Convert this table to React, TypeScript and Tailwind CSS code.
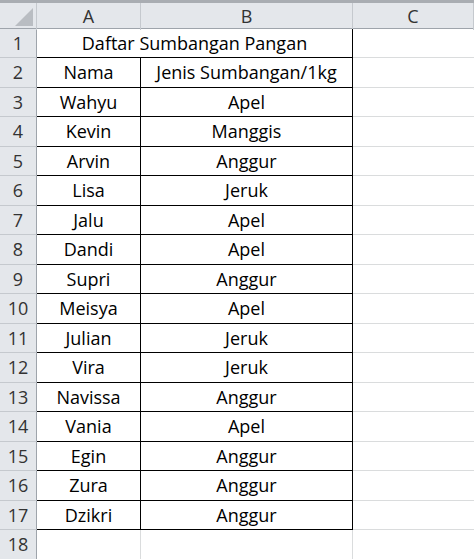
import React from "react";

const rows: [string, string][] = [
  ["Wahyu", "Apel"],
  ["Kevin", "Manggis"],
  ["Arvin", "Anggur"],
  ["Lisa", "Jeruk"],
  ["Jalu", "Apel"],
  ["Dandi", "Apel"],
  ["Supri", "Anggur"],
  ["Meisya", "Apel"],
  ["Julian", "Jeruk"],
  ["Vira", "Jeruk"],
  ["Navissa", "Anggur"],
  ["Vania", "Apel"],
  ["Egin", "Anggur"],
  ["Zura", "Anggur"],
  ["Dzikri", "Anggur"],
];

const font = { fontFamily: '"Open Sans", "Noto Sans", sans-serif' };

function RowHead({ n, h }: { n: number; h: string }) {
  return (
    <div
      className={`${h} flex items-center justify-center bg-[#e4e7eb] border-r border-b border-r-[#9ea4ab] border-b-[#c5c9ce] text-[18px] text-[#333]`}
    >
      {n}
    </div>
  );
}

export default function App() {
  const heights = ["h-[30px]", "h-[29px]"];
  return (
    <div className="w-[474px] h-[559px] overflow-hidden bg-white" style={font}>
      <div className="h-[3px] bg-[#a9adb2]" />
      {/* column header */}
      <div className="grid grid-cols-[37px_104px_212px_121px] h-[26px] bg-[#e4e7eb] border-b border-[#9ea4ab] text-[18px] text-[#333]">
        <div className="relative border-r border-[#c5c9ce]">
          <svg className="absolute left-0 top-0" width="37" height="26" viewBox="0 0 37 26">
            <polygon points="33,5 33,23 15,23" fill="#b9bdc2" />
          </svg>
        </div>
        <div className="flex items-center justify-center border-r border-[#c5c9ce]">A</div>
        <div className="flex items-center justify-center border-r border-[#c5c9ce]">B</div>
        <div className="flex items-center justify-center border-r border-[#c5c9ce]">C</div>
      </div>
      {/* row 1 */}
      <div className="grid grid-cols-[37px_316px_121px] text-[18px] text-black">
        <RowHead n={1} h="h-[29px]" />
        <div className="h-[29px] flex items-center justify-center border-r border-b border-black">
          Daftar Sumbangan Pangan
        </div>
        <div className="h-[29px] border-b border-[#dadcdd]" />
      </div>
      {/* row 2 */}
      <div className="grid grid-cols-[37px_104px_212px_121px] text-[18px] text-black">
        <RowHead n={2} h="h-[30px]" />
        <div className="h-[30px] flex items-center justify-center border-r border-b border-black">Nama</div>
        <div className="h-[30px] flex items-center justify-center border-r border-b border-black">
          Jenis Sumbangan/1kg
        </div>
        <div className="h-[30px] border-b border-[#dadcdd]" />
      </div>
      {rows.map(([name, fruit], i) => {
        const h = heights[(i + 1) % 2];
        return (
          <div key={i} className="grid grid-cols-[37px_104px_212px_121px] text-[18px] text-black">
            <RowHead n={i + 3} h={h} />
            <div className={`${h} flex items-center justify-center border-r border-b border-black`}>{name}</div>
            <div className={`${h} flex items-center justify-center border-r border-b border-black`}>{fruit}</div>
            <div className={`${h} border-b border-[#dadcdd]`} />
          </div>
        );
      })}
      <div className="grid grid-cols-[37px_104px_212px_121px] text-[18px] text-black">
        <RowHead n={18} h="h-[30px]" />
        <div className="h-[30px] border-r border-[#dadcdd]" />
        <div className="h-[30px] border-r border-[#dadcdd]" />
        <div className="h-[30px]" />
      </div>
    </div>
  );
}
